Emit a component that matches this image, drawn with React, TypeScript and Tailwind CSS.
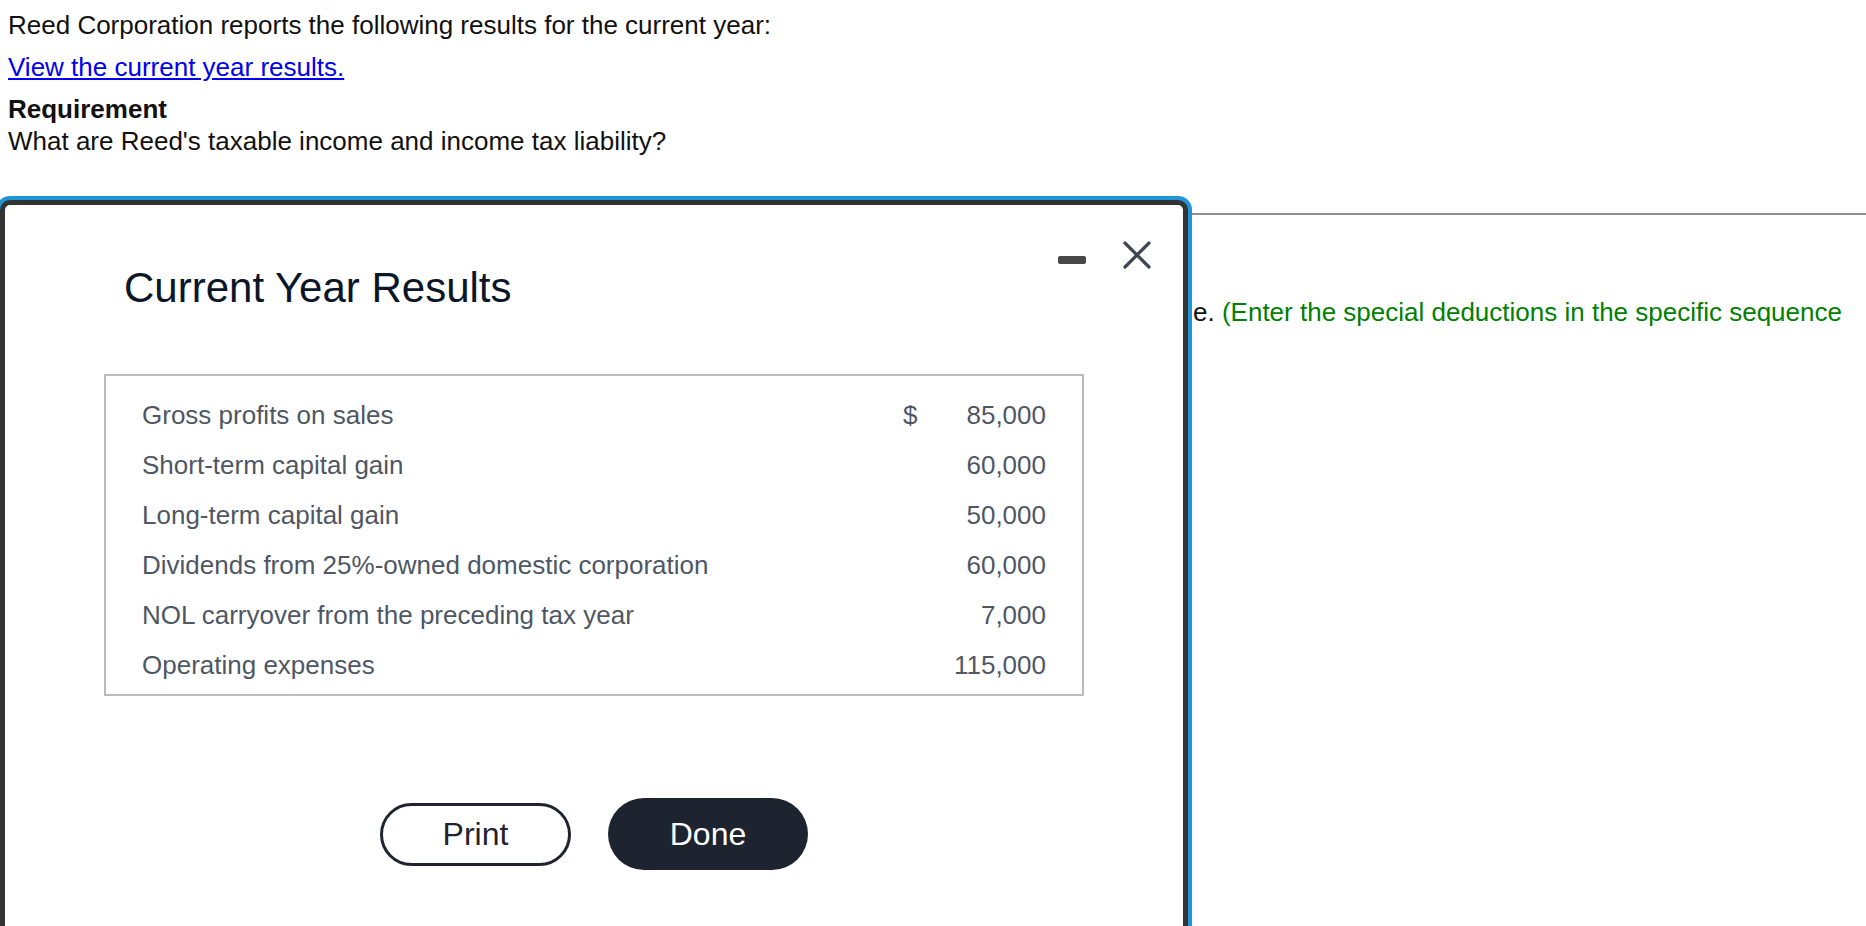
const results = [
  { label: 'Gross profits on sales', amount: '85,000', dollar: true },
  { label: 'Short-term capital gain', amount: '60,000' },
  { label: 'Long-term capital gain', amount: '50,000' },
  { label: 'Dividends from 25%-owned domestic corporation', amount: '60,000' },
  { label: 'NOL carryover from the preceding tax year', amount: '7,000' },
  { label: 'Operating expenses', amount: '115,000' },
];

function ResultsDialog() {
  return (
    <div className="absolute left-0 top-[200px] w-[1188px] h-[780px] bg-white border-[5px] border-[#333] rounded-[10px] shadow-[0_0_0_4px_#1f95d6]">
      {/* header */}
      <div className="flex items-start justify-between pl-[119px] pr-[32px] pt-[36px]">
        <h2 className="mt-[23px] text-[42px] leading-[48px] text-[#0b1629]">Current Year Results</h2>
        <div className="flex items-start gap-[37px]">
          <button className="mt-[15px] w-[28px] h-[8px] rounded-[2px] bg-[#484848]" aria-label="Minimize" />
          <button className="w-[28px] h-[28px]" aria-label="Close">
            <svg viewBox="0 0 28 28" className="w-[28px] h-[28px]">
              <path d="M2 2 L26 26 M26 2 L2 26" stroke="#3e4651" strokeWidth="3.2" strokeLinecap="round" fill="none" />
            </svg>
          </button>
        </div>
      </div>

      {/* table */}
      <div className="mx-[99px] mt-[62px] border-2 border-[#bbbbbb] pt-[14px] pb-[4px] pl-[36px] pr-[36px] text-[26px] text-[#4f5764]">
        {results.map((row) => (
          <div key={row.label} className="flex items-center h-[50px]">
            <span className="flex-1">{row.label}</span>
            <span className="w-[43px]">{row.dollar ? '$' : ''}</span>
            <span className="w-[100px] text-right">{row.amount}</span>
          </div>
        ))}
      </div>

      {/* actions */}
      <div className="mt-[102px] flex items-center justify-center gap-[37px] text-[32px]">
        <button className="w-[191px] h-[63px] rounded-full border-[3px] border-[#1f2430] text-[#1f2430]">
          Print
        </button>
        <button className="w-[200px] h-[72px] rounded-full bg-[#1e2330] text-white">
          Done
        </button>
      </div>
    </div>
  );
}

export default function App() {
  return (
    <div className="relative h-[926px] overflow-hidden bg-white font-['Liberation_Sans',Arial,sans-serif] text-[26px] leading-[29px] text-[#111]">
      <div className="pl-[8px] pt-[11px]">
        <p>Reed Corporation reports the following results for the current year:</p>
        <p className="mt-[13px]">
          <a href="#" className="text-[#0000ee] underline">View the current year results.</a>
        </p>
        <p className="mt-[13px] font-bold">Requirement</p>
        <p className="mt-[3px]">What are Reed's taxable income and income tax liability?</p>
      </div>

      <div className="mt-[57px] h-[2px] bg-[#8b8f9b]" />

      <p className="mt-[83px] pl-[1193px] whitespace-nowrap">
        e. <span className="text-[#008000]">(Enter the special deductions in the specific sequence</span>
      </p>

      <ResultsDialog />
    </div>
  );
}
